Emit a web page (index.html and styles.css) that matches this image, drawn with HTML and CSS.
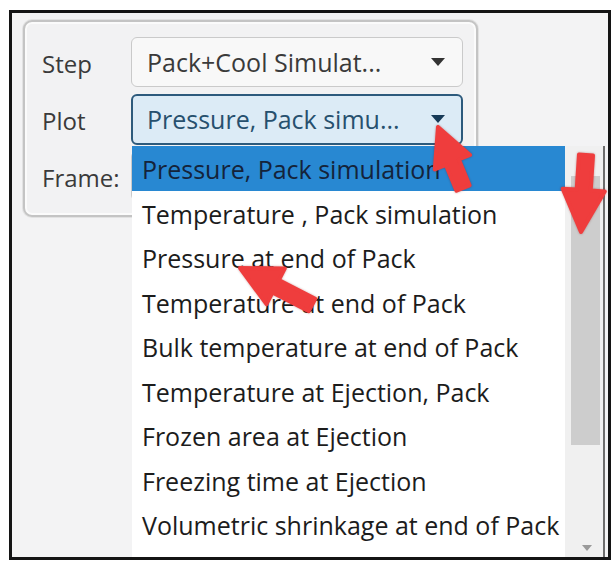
FILE: index.html
```html
<!DOCTYPE html>
<html>
<head>
<meta charset="utf-8">
<link rel="stylesheet" href="styles.css">
</head>
<body>
<div class="frame">
  <div class="panel">
    <span class="label">Step</span>
    <div class="combo"><span class="combo-text">Pack+Cool Simulat...</span><span class="caret"></span></div>
    <span class="label">Plot</span>
    <div class="combo active"><span class="combo-text">Pressure, Pack simu...</span><span class="caret"></span></div>
    <span class="label">Frame:</span>
    <div class="combo"></div>
  </div>
  <div class="dropdown">
    <ul class="list">
      <li class="item selected">Pressure, Pack simulation</li>
      <li class="item">Temperature , Pack simulation</li>
      <li class="item">Pressure at end of Pack</li>
      <li class="item">Temperature at end of Pack</li>
      <li class="item">Bulk temperature at end of Pack</li>
      <li class="item">Temperature at Ejection, Pack</li>
      <li class="item">Frozen area at Ejection</li>
      <li class="item">Freezing time at Ejection</li>
      <li class="item">Volumetric shrinkage at end of Pack</li>
    </ul>
    <div class="scrollbar">
      <span class="sb-up"></span>
      <span class="sb-thumb"></span>
      <span class="sb-down"></span>
    </div>
  </div>
</div>
<svg class="annot" width="615" height="566" viewBox="0 0 615 566">
  <g fill="#ef3d3d" stroke="#ef3d3d" stroke-width="4" stroke-linejoin="round">
    <polygon points="469.5,185.3 458.9,159.5 470,155 438,127 434.8,169.4 445.9,164.9 456.5,190.7"/>
    <polygon points="579,154.5 576.7,189.6 562.7,188.7 581,232 604.7,191.5 590.7,190.6 593,155.5"/>
    <polygon points="315.2,298.8 278.8,280.1 284.7,268.5 240,268 266.5,304.1 272.4,292.5 308.8,311.2"/>
  </g>
</svg>
</body>
</html>
```
FILE: styles.css
```css
* { box-sizing: border-box; }
html, body { margin: 0; padding: 0; background: #ffffff; }
body {
  width: 615px;
  height: 566px;
  position: relative;
  overflow: hidden;
  font-family: "Open Sans", "Noto Sans", sans-serif;
  color: #1c1c1c;
}
.frame {
  position: relative;
  margin: 10px 0 0 9px;
  width: 602px;
  height: 550px;
  border: 3px solid #141414;
  background: #f3f3f4;
  overflow: hidden;
}
.panel {
  margin: 7px 0 0 11px;
  width: 455px;
  height: 197px;
  border: 2px solid #c4c4c4;
  border-radius: 9px;
  box-shadow: 0 0 0 1px #e2e2e2, inset 0 0 0 2px #fbfbfb;
  background: #f2f2f3;
  padding: 15px 13px 13px 17px;
  display: grid;
  grid-template-columns: 89px 332px;
  grid-auto-rows: 50px;
  row-gap: 7px;
  align-items: center;
}
.label {
  font-size: 24px;
  color: #3a3a3a;
  padding-top: 2px;
}
.combo {
  height: 50px;
  border: 1px solid #cacaca;
  border-radius: 6px;
  background: #f8f8f8;
  display: flex;
  align-items: center;
  justify-content: space-between;
  padding: 0 17px 0 15px;
  font-size: 25px;
  color: #3a3a3a;
}
.combo.active {
  height: 51px;
  border: 2px solid #2d5a7c;
  background: #dcebf6;
  color: #27506e;
  padding-left: 14px;
}
.caret {
  width: 0;
  height: 0;
  border-left: 7px solid transparent;
  border-right: 7px solid transparent;
  border-top: 8px solid #333333;
}
.combo.active .caret { border-top-color: #173a57; margin-right: -1px; }
.dropdown {
  position: absolute;
  left: 120px;
  top: 133px;
  right: 3px;
  bottom: 0;
  background: #ffffff;
  border-right: 2px solid #6d6d6d;
  display: flex;
}
.list {
  list-style: none;
  margin: 0;
  padding: 0;
  width: 433px;
}
.item {
  height: 44.5px;
  line-height: 46px;
  padding-left: 10px;
  font-size: 25px;
  color: #1c1c1c;
  white-space: nowrap;
}
.item.selected {
  background: #2888d2;
  color: #14233a;
}
.scrollbar {
  position: relative;
  flex: 1;
  background: #f0f0f0;
}
.sb-thumb {
  position: absolute;
  left: 6px;
  right: 3px;
  top: 30px;
  height: 269px;
  background: #cdcdcd;
}
.sb-up, .sb-down {
  position: absolute;
  left: 17px;
  width: 0;
  height: 0;
  border-left: 5px solid transparent;
  border-right: 5px solid transparent;
}
.sb-up { top: 8px; border-bottom: 6px solid #9a9a9a; }
.sb-down { bottom: 6px; border-top: 6px solid #9a9a9a; }
.annot {
  position: absolute;
  left: 0;
  top: 0;
  filter: drop-shadow(0 0 1px rgba(120, 0, 0, 0.35));
}
```
